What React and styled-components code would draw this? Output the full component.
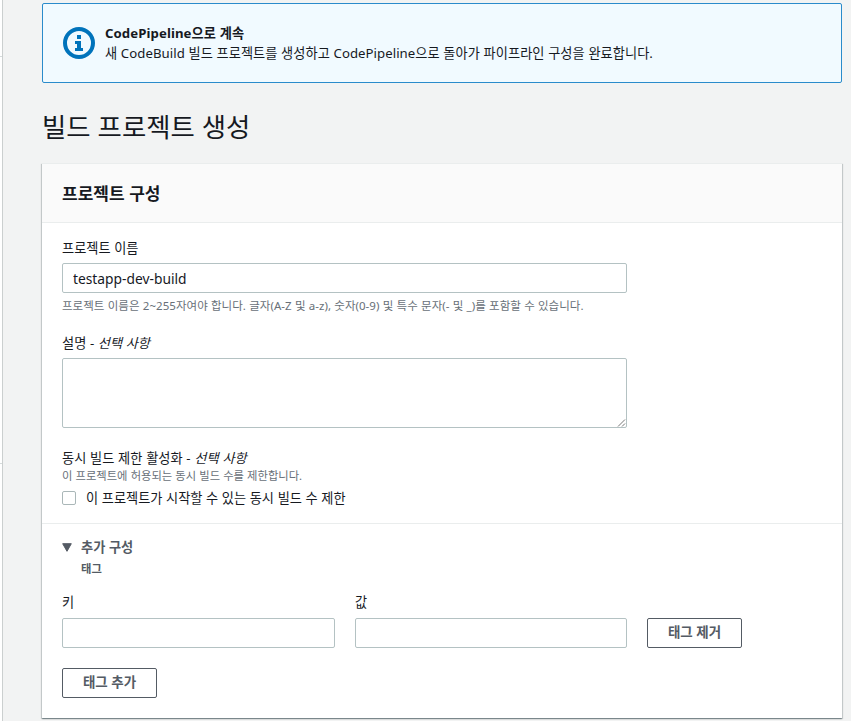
import React from 'react'
import styled, { createGlobalStyle } from 'styled-components'

export default () =>
  <Page>
    <GlobalStyle />
    <Rail>
      <RailSection height={57} />
      <RailSection height={407} />
    </Rail>
    <Main>
      <Banner>
        <InfoIcon />
        <div>
          <BannerTitle>CodePipeline으로 계속</BannerTitle>
          <BannerText>새 CodeBuild 빌드 프로젝트를 생성하고 CodePipeline으로 돌아가 파이프라인 구성을 완료합니다.</BannerText>
        </div>
      </Banner>

      <Heading>빌드 프로젝트 생성</Heading>

      <Card>
        <CardHeader>
          <CardTitle>프로젝트 구성</CardTitle>
        </CardHeader>

        <Form>
          <Field gap={19}>
            <Label htmlFor='name'>프로젝트 이름</Label>
            <Input id='name' defaultValue='testapp-dev-build' />
            <Hint>프로젝트 이름은 2~255자여야 합니다. 글자(A-Z 및 a-z), 숫자(0-9) 및 특수 문자(- 및 _)를 포함할 수 있습니다.</Hint>
          </Field>
          <Field gap={20}>
            <Label htmlFor='description'>설명 - <em>선택 사항</em></Label>
            <TextareaBox>
              <Textarea id='description' />
              <Grip />
            </TextareaBox>
          </Field>
          <Limit>
            <LimitTitle>동시 빌드 제한 활성화 - <em>선택 사항</em></LimitTitle>
            <LimitHint>이 프로젝트에 허용되는 동시 빌드 수를 제한합니다.</LimitHint>
            <CheckRow>
              <Checkbox type='checkbox' />
              이 프로젝트가 시작할 수 있는 동시 빌드 수 제한
            </CheckRow>
          </Limit>
        </Form>

        <Extra>
          <Expander>
            <Caret viewBox='0 0 10 9'>
              <path d='M.7.7h8.6L5 8.3z' />
            </Caret>
            <ExpanderTitle>추가 구성</ExpanderTitle>
          </Expander>
          <ExpanderNote>태그</ExpanderNote>
          <TagRow>
            <div>
              <Label htmlFor='key' tall>키</Label>
              <Input id='key' />
            </div>
            <div>
              <Label htmlFor='value' tall>값</Label>
              <Input id='value' />
            </div>
            <Button>태그 제거</Button>
          </TagRow>
          <Button>태그 추가</Button>
        </Extra>
      </Card>
    </Main>
  </Page>

const InfoIcon = () =>
  <InfoSvg viewBox='0 0 32 32'>
    <circle cx='16' cy='16' r='14' fill='none' stroke='#0073bb' strokeWidth='4' />
    <path d='M14 8h4v4h-4zM12 14h6v7h2v3h-8v-3h2v-4h-2z' fill='#0073bb' />
  </InfoSvg>

const Grip = () =>
  <GripSvg viewBox='0 0 9 9'>
    <path d='M1 8.5l7-7M5 8.5l3-3' />
  </GripSvg>

const GlobalStyle = createGlobalStyle`
  * {
    box-sizing: border-box;
  }

  body {
    margin: 0;
    overflow: hidden;
    background: #f2f3f3;
    color: #16191f;
    font-family: 'Noto Sans', 'Noto Sans CJK KR', sans-serif;
    font-size: 13.2px;
    line-height: 20px;
    word-spacing: 0.2px;
  }

  input, textarea, button {
    font: inherit;
    color: inherit;
  }
`

const Page = styled.div`
  display: flex;
  height: 721px;
  overflow: hidden;
`

const Rail = styled.div`
  width: 3px;
  background: #fff;
  border-right: 1px solid #cbcfcf;
`

const RailSection = styled.div`
  height: ${props => props.height}px;
  border-bottom: 1px solid #d5dbdb;
`

const Main = styled.main`
  width: 839px;
  padding: 3px 0 0 39px;
`

const Banner = styled.section`
  display: flex;
  gap: 10px;
  height: 80px;
  padding: 19px 20px;
  background: #f1faff;
  border: 1px solid #2a8bcb;
  border-radius: 2px;
`

const InfoSvg = styled.svg`
  width: 32px;
  height: 32px;
  margin-top: 4px;
`

const BannerTitle = styled.div`
  font-weight: 700;
  letter-spacing: 0.08px;
`

const BannerText = styled.div`
  white-space: nowrap;
  letter-spacing: 0.05px;
`

const Heading = styled.h1`
  height: 80px;
  margin: 0;
  padding-top: 26px;
  font-size: 26.4px;
  font-weight: 400;
  line-height: 36px;
`

const Card = styled.section`
  height: 555px;
  background: #fff;
  border-top: 1px solid #eaeded;
  box-shadow: 0 1px 1px 0 rgba(0, 28, 36, 0.3), 1px 1px 1px 0 rgba(0, 28, 36, 0.15), -1px 1px 1px 0 rgba(0, 28, 36, 0.15);
`

const CardHeader = styled.header`
  height: 59px;
  padding: 18px 20px 0;
  background: #fafafa;
  border-bottom: 1px solid #eaeded;
`

const CardTitle = styled.h2`
  margin: 0;
  font-size: 17px;
  font-weight: 700;
  line-height: 24px;
`

const Form = styled.div`
  height: 301px;
  padding: 15px 20px 0;
  border-bottom: 1px solid #eaeded;
`

const Field = styled.div`
  width: 565px;
  margin-bottom: ${props => props.gap}px;
`

const Label = styled.label.withConfig({ shouldForwardProp: prop => prop !== 'tall' })`
  display: block;
  height: ${props => props.tall ? 26 : 25}px;
  white-space: nowrap;
`

const Input = styled.input`
  display: block;
  width: 100%;
  height: 30px;
  padding: 0 10px;
  border: 1px solid #b4c2c3;
  border-radius: 2px;
  background: #fff;
  outline: none;
  font-size: 13.8px;
`

const Hint = styled.div`
  padding-top: 5px;
  color: #687078;
  font-size: 11.5px;
  line-height: 16px;
  letter-spacing: 0.04px;
  white-space: nowrap;
`

const TextareaBox = styled.div`
  position: relative;
  height: 70px;
`

const Textarea = styled.textarea`
  display: block;
  width: 100%;
  height: 70px;
  border: 1px solid #b4c2c3;
  border-radius: 2px;
  background: #fff;
  outline: none;
  resize: none;
`

const GripSvg = styled.svg`
  position: absolute;
  right: 1px;
  bottom: 1px;
  width: 9px;
  height: 9px;
  stroke: #666;
  stroke-width: 0.9;
`

const Limit = styled.div`
  white-space: nowrap;
`

const LimitTitle = styled.div`
  height: 18px;
  letter-spacing: 0.05px;
`

const LimitHint = styled.div`
  color: #687078;
  font-size: 11.3px;
  line-height: 20px;
`

const CheckRow = styled.label`
  display: flex;
  align-items: center;
  gap: 10px;
  height: 24px;
`

const Checkbox = styled.input`
  appearance: none;
  width: 14px;
  height: 14px;
  margin: 0;
  border: 1px solid #aab7b8;
  border-radius: 2px;
`

const Extra = styled.div`
  padding: 13px 20px 0;
`

const Expander = styled.div`
  display: flex;
  align-items: center;
  gap: 9px;
  color: #545b64;
`

const Caret = styled.svg`
  width: 10px;
  height: 9px;
  fill: #545b64;
  stroke: #545b64;
  stroke-width: 1;
  stroke-linejoin: round;
`

const ExpanderTitle = styled.span`
  font-weight: 700;
`

const ExpanderNote = styled.div`
  height: 35px;
  padding: 2px 0 0 19px;
  color: #545b64;
  font-size: 11.3px;
  font-weight: 700;
`

const TagRow = styled.div`
  display: grid;
  grid-template-columns: 273px 272px 95px;
  gap: 20px;
  align-items: end;
  margin-bottom: 20px;
`

const Button = styled.button`
  width: 95px;
  height: 30px;
  padding: 0 0 2px;
  border: 1px solid #545b64;
  border-radius: 2px;
  background: #fff;
  color: #545b64;
  font-size: 13.5px;
  font-weight: 700;
  line-height: 20px;
`
